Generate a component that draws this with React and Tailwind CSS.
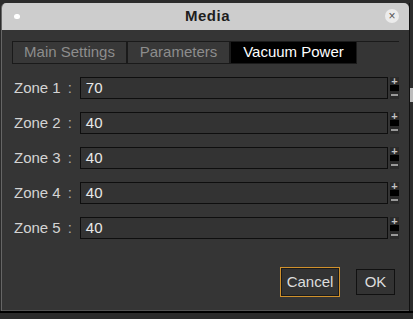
import React from 'react';

const zones = [
  { label: 'Zone 1', value: '70' },
  { label: 'Zone 2', value: '40' },
  { label: 'Zone 3', value: '40' },
  { label: 'Zone 4', value: '40' },
  { label: 'Zone 5', value: '40' },
];

const tabs = [
  { name: 'Main Settings', w: 'w-[115px]' },
  { name: 'Parameters', w: 'w-[103px]' },
  { name: 'Vacuum Power', w: 'w-[127px]', active: true },
];

function Spinner() {
  return (
    <div className="ml-[2px] flex h-[22px] w-[9px] flex-col items-center justify-between bg-[#111]">
      <span className="flex h-[8px] w-[9px] items-center justify-center bg-[#2a2a2a] text-[11px] font-bold leading-none text-[#c4c4c4]">+</span>
      <span className="h-[6px] w-[9px] bg-black" />
      <span className="flex h-[8px] w-[9px] items-center justify-center bg-[#2a2a2a]">
        <span className="h-[2px] w-[7px] bg-[#999]" />
      </span>
    </div>
  );
}

export default function App() {
  return (
    <div
      className="flex h-[319px] w-[413px] flex-col overflow-hidden bg-[#2b2b2b] pt-[3px]"
      style={{ fontFamily: '"Liberation Sans", Arial, sans-serif' }}
    >
      <div className="flex">
        <div className="ml-[1px] flex h-[308px] w-[408px] flex-col overflow-hidden rounded-t-[5px] border-l border-[#666] bg-[#353535]">
          <div className="relative flex h-[27px] items-center justify-center bg-[#cdcdcd]">
            <span className="absolute left-[12px] top-[11px] h-[5px] w-[6px] rounded-full bg-white" />
            <span className="ml-[4px] text-[15px] font-bold tracking-[0.5px] text-[#1e1e1e]">Media</span>
            <span className="absolute right-[10px] top-[6px] flex h-[14px] w-[14px] items-center justify-center rounded-full bg-[#ececec] text-[12px] leading-none text-[#555]">
              ×
            </span>
          </div>
          <div className="flex flex-1 flex-col pl-[12px] pr-[10px]">
            <div className="-ml-[2px] mt-[11px] flex h-[23px] border-t border-[#1a1a1a]">
              {tabs.map((t) => (
                <div
                  key={t.name}
                  className={`${t.w} flex items-center justify-center border-x border-b border-[#1a1a1a] text-[15px] ${
                    t.active ? 'bg-black text-white' : 'bg-[#383838] text-[#8d8d8d]'
                  }`}
                >
                  {t.name}
                </div>
              ))}
            </div>
            <div className="mt-[13px] flex flex-col gap-[13px]">
              {zones.map((z) => (
                <div key={z.label} className="flex h-[22px] items-center">
                  <span className="w-[54px] text-[15px] text-[#d4d4d4]">{z.label}</span>
                  <span className="w-[12px] text-[15px] text-[#aaa]">:</span>
                  <div className="flex h-[22px] w-[309px] items-center border border-[#0e0e0e] bg-[#333] pl-[5px] text-[15px] text-[#e8e8e8]">
                    {z.value}
                  </div>
                  <Spinner />
                </div>
              ))}
            </div>
            <div className="mt-[28px] flex justify-end gap-[16px] pr-[4px]">
              <button className="h-[30px] w-[60px] border border-[#d0912c] bg-[#333] text-[15px] text-[#ddd] outline outline-1 -outline-offset-2 outline-[#1a1a1a]">
                Cancel
              </button>
              <button className="mt-[2px] h-[26px] w-[39px] border border-[#111] bg-[#333] text-[15px] text-[#ddd]">
                OK
              </button>
            </div>
          </div>
          <div className="h-[1px] bg-[#555]" />
        </div>
        <div className="flex w-[4px] flex-col border-l border-[#111] bg-[#2b2b2b]">
          <div className="mt-[85px] h-[14px] bg-[#bbb]" />
        </div>
      </div>
      <div className="h-[2px] bg-black" />
    </div>
  );
}
